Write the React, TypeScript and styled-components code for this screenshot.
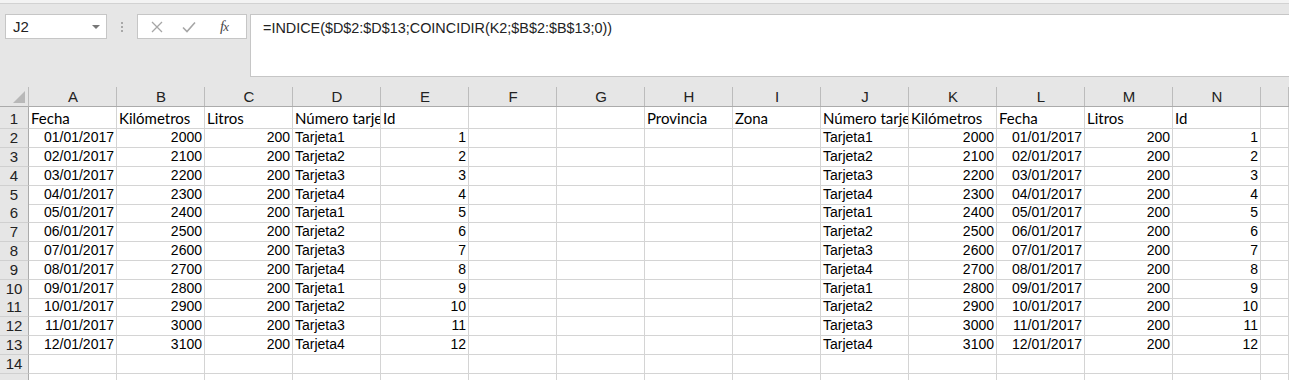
import React from 'react';
import styled, { createGlobalStyle } from 'styled-components';

const GlobalStyle = createGlobalStyle`
  html, body {
    margin: 0;
    padding: 0;
    background: #e6e6e6;
  }
  * {
    box-sizing: border-box;
  }
`;

const Page = styled.div`
  width: 1289px;
  height: 380px;
  overflow: hidden;
  background: #e6e6e6;
  font-family: "Liberation Sans", Arial, sans-serif;
`;

const TopStrip = styled.div`
  height: 4px;
  background: #f3f3f3;
  border-bottom: 1px solid #d2d2d2;
`;

const Toolbar = styled.div`
  height: 83px;
  display: flex;
  align-items: flex-start;
  padding: 10px 0 0 5px;
`;

const NameBox = styled.div`
  width: 102px;
  height: 25px;
  background: #fff;
  border: 1px solid #c6c6c6;
  display: flex;
  align-items: center;
  justify-content: space-between;
  padding: 0 6px 0 7px;
  font-size: 15px;
  color: #222;
`;

const DropArrow = styled.span`
  width: 0;
  height: 0;
  border-left: 4px solid transparent;
  border-right: 4px solid transparent;
  border-top: 4px solid #777;
`;

const Grip = styled.div`
  width: 30px;
  height: 25px;
  display: flex;
  flex-direction: column;
  align-items: center;
  justify-content: center;
  gap: 2px;

  span {
    width: 2px;
    height: 2px;
    background: #a8a8a8;
  }
`;

const ButtonsBox = styled.div`
  width: 110px;
  height: 25px;
  background: #fff;
  border: 1px solid #c6c6c6;
  display: flex;
  align-items: center;
  padding: 0 0 0 13px;
  gap: 19px;
`;

const Fx = styled.span`
  font-family: "Liberation Serif", "Times New Roman", serif;
  font-style: italic;
  font-size: 15px;
  color: #4a4a4a;
  margin-left: 5px;
  letter-spacing: -1px;

  sub {
    font-size: 13px;
    vertical-align: baseline;
  }
`;

const FormulaBox = styled.div`
  flex: 1;
  height: 63px;
  margin-left: 3px;
  background: #fff;
  border: 1px solid #c6c6c6;
  border-right: none;
  padding: 5px 12px;
  font-size: 14.4px;
  color: #222;
`;

const Sheet = styled.div`
  background: #fff;
`;

const Row = styled.div<{ $h: number }>`
  display: grid;
  grid-template-columns: 29px repeat(14, 88px) 1fr;
  height: ${p => p.$h}px;
`;

const ColHeader = styled.div`
  background: #e6e6e6;
  border-bottom: 1px solid #ababab;
  display: flex;
  align-items: center;
  justify-content: center;
  font-size: 15px;
  color: #222;
  position: relative;

  &::after {
    content: '';
    position: absolute;
    right: 0;
    top: 0;
    bottom: 0;
    width: 1px;
    background: #bcbcbc;
  }
`;

const Corner = styled.div`
  background: #e6e6e6;
  border-bottom: 1px solid #ababab;
  border-right: 1px solid #bcbcbc;
  display: flex;
  align-items: flex-end;
  justify-content: flex-end;
  padding: 0 3px 3px 0;
`;

const RowHeader = styled.div`
  background: #e6e6e6;
  border-right: 1px solid #ababab;
  border-bottom: 1px solid #d0d0d0;
  display: flex;
  align-items: flex-end;
  justify-content: center;
  padding-bottom: 1px;
  font-size: 15px;
  line-height: 17px;
  color: #222;
`;

const Cell = styled.div<{ $align?: 'left' | 'right'; $title?: boolean }>`
  border-right: 1px solid #d4d4d4;
  border-bottom: 1px solid #d4d4d4;
  display: flex;
  align-items: flex-end;
  justify-content: ${p => (p.$align === 'right' ? 'flex-end' : 'flex-start')};
  padding: 0 2px 1px 2px;
  overflow: hidden;
  white-space: nowrap;
  font-family: ${p => (p.$title ? 'Lato, "Open Sans", sans-serif' : '"Liberation Sans", Arial, sans-serif')};
  font-size: ${p => (p.$title ? '15px' : '14px')};
  color: #000;
  line-height: 17px;
`;

const columns = ['A', 'B', 'C', 'D', 'E', 'F', 'G', 'H', 'I', 'J', 'K', 'L', 'M', 'N', ''];

type CellData = { text: string; right?: boolean };

const pad = (n: number) => (n < 10 ? '0' + n : String(n));

const titles = [
  'Fecha', 'Kilómetros', 'Litros', 'Número tarjeta', 'Id', '', '',
  'Provincia', 'Zona', 'Número tarjeta', 'Kilómetros', 'Fecha', 'Litros', 'Id', '',
];

const dataRows: CellData[][] = Array.from({ length: 12 }, (_, i) => {
  const date = `${pad(i + 1)}/01/2017`;
  const km = String(2000 + i * 100);
  const card = `Tarjeta${(i % 4) + 1}`;
  const id = String(i + 1);
  return [
    { text: date, right: true },
    { text: km, right: true },
    { text: '200', right: true },
    { text: card },
    { text: id, right: true },
    { text: '' },
    { text: '' },
    { text: '' },
    { text: '' },
    { text: card },
    { text: km, right: true },
    { text: date, right: true },
    { text: '200', right: true },
    { text: id, right: true },
    { text: '' },
  ];
});

const heights = [22, 19, 19, 19, 18, 19, 19, 19, 19, 18, 19, 19, 19, 19, 19];

const App: React.FC = () => {
  return (
    <Page>
      <GlobalStyle />
      <TopStrip />
      <Toolbar>
        <NameBox>
          J2
          <DropArrow />
        </NameBox>
        <Grip>
          <span />
          <span />
          <span />
        </Grip>
        <ButtonsBox>
          <svg width="12" height="12" viewBox="0 0 12 12">
            <path d="M1 1 L11 11 M11 1 L1 11" stroke="#a6a6a6" strokeWidth="1.3" fill="none" />
          </svg>
          <svg width="14" height="12" viewBox="0 0 14 12">
            <path d="M1 6.5 L5 10.5 L13 1.5" stroke="#a6a6a6" strokeWidth="1.6" fill="none" />
          </svg>
          <Fx>
            f<sub>x</sub>
          </Fx>
        </ButtonsBox>
        <FormulaBox>=INDICE($D$2:$D$13;COINCIDIR(K2;$B$2:$B$13;0))</FormulaBox>
      </Toolbar>
      <Sheet>
        <Row $h={20}>
          <Corner>
            <svg width="12" height="12" viewBox="0 0 12 12">
              <polygon points="12,0 12,12 0,12" fill="#b8b8b8" />
            </svg>
          </Corner>
          {columns.map((c, i) => (
            <ColHeader key={i}>{c}</ColHeader>
          ))}
        </Row>
        <Row $h={heights[0]}>
          <RowHeader>1</RowHeader>
          {titles.map((t, i) => (
            <Cell key={i} $title>
              {t}
            </Cell>
          ))}
        </Row>
        {dataRows.map((row, r) => (
          <Row key={r} $h={heights[r + 1]}>
            <RowHeader>{r + 2}</RowHeader>
            {row.map((c, i) => (
              <Cell key={i} $align={c.right ? 'right' : 'left'}>
                {c.text}
              </Cell>
            ))}
          </Row>
        ))}
        <Row $h={heights[13]}>
          <RowHeader>14</RowHeader>
          {columns.map((_, i) => (
            <Cell key={i} />
          ))}
        </Row>
        {/* row 15 only peeks in below the fold */}
        <Row $h={heights[14]}>
          <RowHeader />
          {columns.map((_, i) => (
            <Cell key={i} />
          ))}
        </Row>
      </Sheet>
    </Page>
  );
};

export default App;
